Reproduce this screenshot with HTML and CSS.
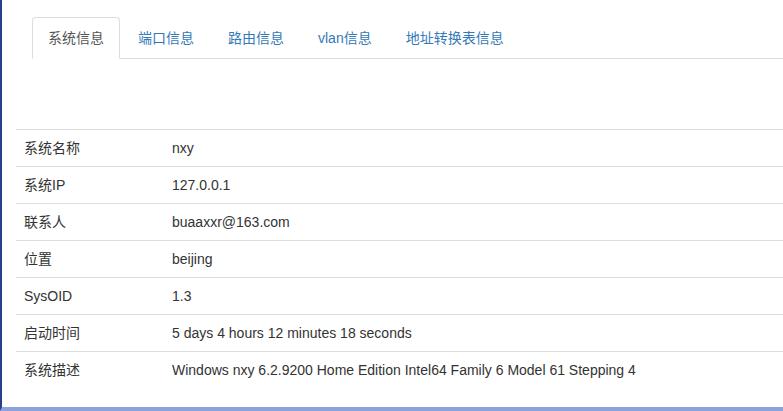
FILE: index.html
```html
<!DOCTYPE html>
<html lang="zh">
<head>
<meta charset="utf-8">
<title>系统信息</title>
<link rel="stylesheet" href="styles.css">
</head>
<body>
<div class="frame">
  <div class="page">
    <ul class="tabs">
      <li class="tab active"><a>系统信息</a></li>
      <li class="tab"><a>端口信息</a></li>
      <li class="tab"><a>路由信息</a></li>
      <li class="tab"><a>vlan信息</a></li>
      <li class="tab"><a>地址转换表信息</a></li>
    </ul>
    <table class="info">
      <tr><td class="key">系统名称</td><td>nxy</td></tr>
      <tr><td class="key">系统IP</td><td>127.0.0.1</td></tr>
      <tr><td class="key">联系人</td><td>buaaxxr@163.com</td></tr>
      <tr><td class="key">位置</td><td>beijing</td></tr>
      <tr><td class="key">SysOID</td><td>1.3</td></tr>
      <tr><td class="key">启动时间</td><td>5 days 4 hours 12 minutes 18 seconds</td></tr>
      <tr><td class="key">系统描述</td><td>Windows nxy 6.2.9200 Home Edition Intel64 Family 6 Model 61 Stepping 4</td></tr>
    </table>
  </div>
</div>
</body>
</html>
```

FILE: styles.css
```css
html, body {
  margin: 0;
  padding: 0;
  background: #fff;
}
body {
  font-family: "Liberation Sans", Arial, "Noto Sans CJK SC", sans-serif;
  font-size: 14px;
  line-height: 20px;
  color: #333;
  width: 783px;
  height: 411px;
  overflow: hidden;
}
.frame {
  box-sizing: border-box;
  height: 411px;
  border-left: 2px solid #26418c;
  border-bottom: 4px solid #8ba2dd;
  overflow: hidden;
}
.page {
  padding: 17px 0 0 14px;
}
.tabs {
  list-style: none;
  margin: 0 0 70px 16px;
  padding: 0;
  display: flex;
  border-bottom: 1px solid #ddd;
}
.tab {
  margin-right: 2px;
  margin-bottom: -1px;
}
.tab a {
  display: block;
  padding: 10px 15px;
  border: 1px solid transparent;
  border-radius: 4px 4px 0 0;
  color: #337ab7;
  text-decoration: none;
}
.tab.active a {
  color: #555;
  background: #fff;
  border-color: #ddd #ddd transparent;
}
.info {
  width: calc(100% + 20px);
  border-collapse: collapse;
  border-spacing: 0;
}
.info td {
  padding: 8px;
  border-top: 1px solid #ddd;
  vertical-align: top;
  white-space: nowrap;
}
.info td.key {
  width: 132px;
}
```
